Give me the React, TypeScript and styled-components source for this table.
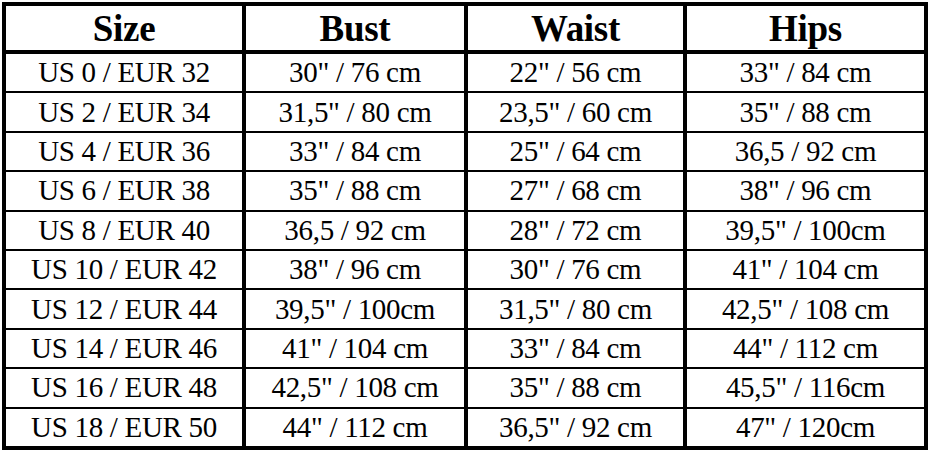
import React from 'react';
import styled, { createGlobalStyle } from 'styled-components';

const GlobalStyle = createGlobalStyle`
  html, body {
    margin: 0;
    padding: 0;
    background: #fff;
  }
  body {
    font-family: 'Liberation Serif', 'Times New Roman', serif;
    color: #000;
  }
`;

const Page = styled.div`
  padding: 2px 0 0 2px;
`;

const Table = styled.table`
  border-collapse: collapse;
  table-layout: fixed;
  width: 926px;
  border: 4px solid #000;
`;

const HeadCell = styled.th`
  height: 44px;
  padding: 0;
  font-size: 37px;
  font-weight: 700;
  text-align: center;
  vertical-align: middle;
  line-height: 1;
  border-left: 4px solid #000;
  border-right: 4px solid #000;
  border-bottom: 4px solid #000;
  letter-spacing: -0.3px;
`;

const Cell = styled.td`
  height: 37.4px;
  padding: 0;
  font-size: 29px;
  text-align: center;
  vertical-align: middle;
  line-height: 1;
  white-space: nowrap;
  border-left: 4px solid #000;
  border-right: 4px solid #000;
  border-bottom: 2.5px solid #000;
  letter-spacing: -0.3px;
`;

const columns = [
  { title: 'Size', width: 239 },
  { title: 'Bust', width: 221 },
  { title: 'Waist', width: 218 },
  { title: 'Hips', width: 240 },
];

const rows: string[][] = [
  ['US 0 / EUR 32', '30" / 76 cm', '22" / 56 cm', '33" / 84 cm'],
  ['US 2 / EUR 34', '31,5" / 80 cm', '23,5" / 60 cm', '35" / 88 cm'],
  ['US 4 / EUR 36', '33" / 84 cm', '25" / 64 cm', '36,5 / 92 cm'],
  ['US 6 / EUR 38', '35" / 88 cm', '27" / 68 cm', '38" / 96 cm'],
  ['US 8 / EUR 40', '36,5 / 92 cm', '28" / 72 cm', '39,5" / 100cm'],
  ['US 10 / EUR 42', '38" / 96 cm', '30" / 76 cm', '41" / 104 cm'],
  ['US 12 / EUR 44', '39,5" / 100cm', '31,5" / 80 cm', '42,5" / 108 cm'],
  ['US 14 / EUR 46', '41" / 104 cm', '33" / 84 cm', '44" / 112 cm'],
  ['US 16 / EUR 48', '42,5" / 108 cm', '35" / 88 cm', '45,5" / 116cm'],
  ['US 18 / EUR 50', '44" / 112 cm', '36,5" / 92 cm', '47" / 120cm'],
];

const App: React.FC = () => {
  return (
    <Page>
      <GlobalStyle />
      <Table>
        <colgroup>
          {columns.map((c) => (
            <col key={c.title} style={{ width: c.width }} />
          ))}
        </colgroup>
        <thead>
          <tr>
            {columns.map((c) => (
              <HeadCell key={c.title}>{c.title}</HeadCell>
            ))}
          </tr>
        </thead>
        <tbody>
          {rows.map((r) => (
            <tr key={r[0]}>
              {r.map((v, i) => (
                <Cell key={i}>{v}</Cell>
              ))}
            </tr>
          ))}
        </tbody>
      </Table>
    </Page>
  );
};

export default App;
